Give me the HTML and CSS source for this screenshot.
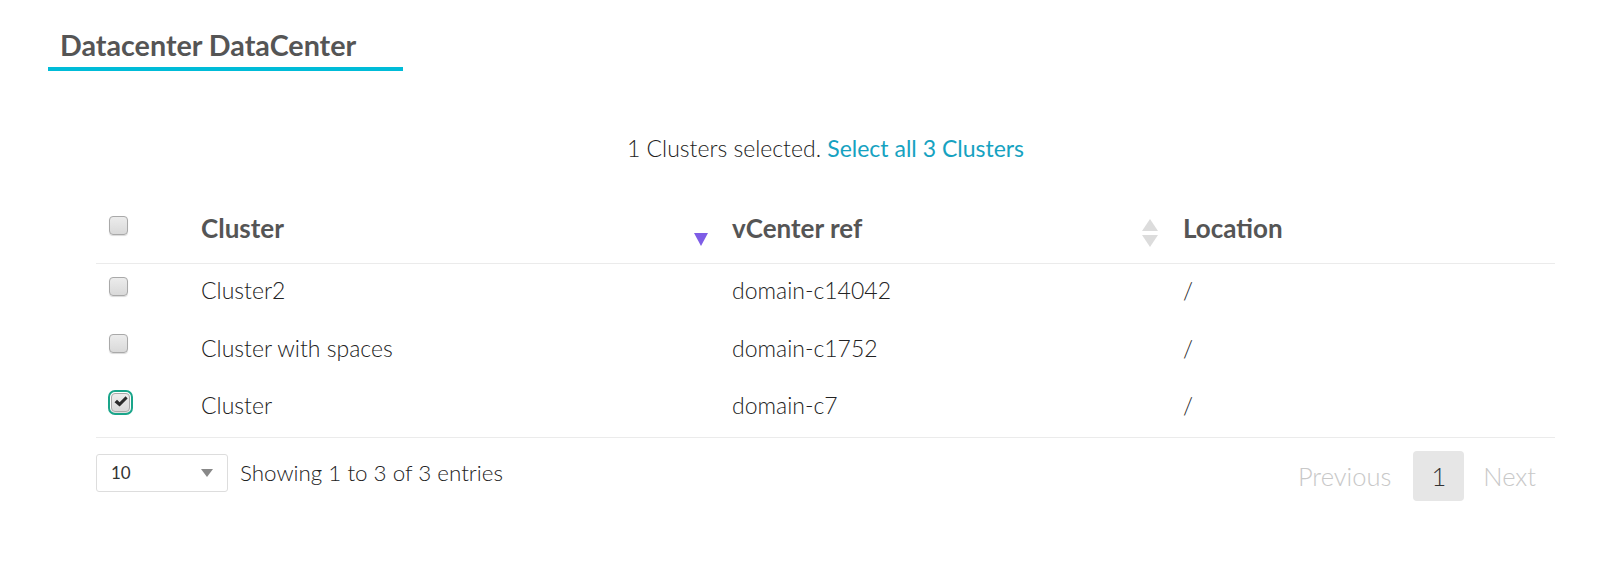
FILE: index.html
```html
<!DOCTYPE html>
<html>
<head>
<meta charset="utf-8">
<link rel="stylesheet" href="styles.css">
</head>
<body>
<div class="page">
  <div class="title-tab"><h1 class="title">Datacenter DataCenter</h1></div>
  <div class="content">
    <p class="selection">1 Clusters selected. <a class="link">Select all 3 Clusters</a></p>
    <table class="grid">
      <colgroup>
        <col class="w-check">
        <col class="w-cluster">
        <col class="w-ref">
        <col class="w-loc">
      </colgroup>
      <thead>
        <tr>
          <th class="col-check"><span class="cb"></span></th>
          <th class="sort-desc">Cluster</th>
          <th class="sort-both">vCenter ref</th>
          <th>Location</th>
        </tr>
      </thead>
      <tbody>
        <tr>
          <td class="col-check"><span class="cb"></span></td>
          <td>Cluster2</td>
          <td>domain-c14042</td>
          <td>/</td>
        </tr>
        <tr>
          <td class="col-check"><span class="cb"></span></td>
          <td>Cluster with spaces</td>
          <td>domain-c1752</td>
          <td>/</td>
        </tr>
        <tr>
          <td class="col-check"><span class="cb cb-checked"><svg class="tick" viewBox="0 0 14 12" width="14" height="12"><path d="M0.5 6.2 L3 3.8 L5.6 6.3 L11.6 0.3 L13.6 2.4 L5.6 10.6 Z" fill="#2b2b2b"/></svg></span></td>
          <td>Cluster</td>
          <td>domain-c7</td>
          <td>/</td>
        </tr>
      </tbody>
    </table>
    <div class="footer">
      <div class="footer-left">
        <div class="select"><span class="select-value">10</span><span class="select-arrow"></span></div>
        <span class="info">Showing 1 to 3 of 3 entries</span>
      </div>
      <div class="pager">
        <span class="pg disabled">Previous</span>
        <span class="pg current">1</span>
        <span class="pg disabled">Next</span>
      </div>
    </div>
  </div>
</div>
</body>
</html>
```

FILE: styles.css
```css
html, body {
  margin: 0;
  padding: 0;
  background: #ffffff;
}
body {
  font-family: Lato, "Open Sans", sans-serif;
  color: #333;
}
.page {
  padding-top: 27px;
}
.title-tab {
  margin-left: 48px;
  width: 355px;
  box-sizing: border-box;
  padding-left: 12px;
  border-bottom: 4px solid #00bcd8;
}
.title {
  margin: 0;
  font-size: 28.7px;
  font-weight: 700;
  color: #555;
  line-height: 36px;
  padding-bottom: 4px;
}
.content {
  margin-left: 96px;
  width: 1459px;
}
.selection {
  margin: 63px 0 0 0;
  text-align: center;
  font-size: 23px;
  font-weight: 300;
  line-height: 28px;
  color: #222;
}
.link {
  color: #16a2c1;
  font-weight: 400;
}
.grid {
  width: 100%;
  border-collapse: collapse;
  margin-top: 38px;
  table-layout: fixed;
}
.w-check { width: 89px; }
.w-cluster { width: 531px; }
.w-ref { width: 451px; }
.grid th {
  text-align: left;
  font-size: 26px;
  font-weight: 700;
  color: #555;
  height: 63px;
  padding: 0 16px 6px 16px;
  border-bottom: 1px solid #ebebeb;
  position: relative;
  vertical-align: middle;
  box-sizing: border-box;
}
.grid td {
  font-size: 23px;
  font-weight: 300;
  color: #222;
  height: 58px;
  padding: 0 16px 5px 16px;
  vertical-align: middle;
  box-sizing: border-box;
}
.grid tbody tr:last-child td {
  border-bottom: 1px solid #ebebeb;
}
.grid .col-check {
  padding: 0 0 0 13px;
  vertical-align: top;
}
.grid th.col-check { padding-top: 16px; }
.grid td.col-check { padding-top: 13px; }
.sort-desc::after {
  content: "";
  position: absolute;
  right: 8px;
  top: 33px;
  border-left: 7px solid transparent;
  border-right: 7px solid transparent;
  border-top: 13px solid #7e5de6;
}
.sort-both::before,
.sort-both::after {
  content: "";
  position: absolute;
  right: 9px;
}
.sort-both::before {
  top: 19px;
  border-left: 8px solid transparent;
  border-right: 8px solid transparent;
  border-bottom: 12px solid #dcdcdc;
}
.sort-both::after {
  top: 35px;
  border-left: 8px solid transparent;
  border-right: 8px solid transparent;
  border-top: 12px solid #dcdcdc;
}
.cb {
  display: block;
  width: 17px;
  height: 17px;
  border: 1px solid #a9a9a9;
  border-radius: 4px;
  background: linear-gradient(#ececec, #d9d9d9);
  box-shadow: 0 1px 1px rgba(0,0,0,0.15);
  position: relative;
}
.cb-checked {
  outline: 2px solid #1aa58a;
  outline-offset: 1px;
  margin-left: 2px;
  margin-top: 1px;
}
.tick {
  position: absolute;
  left: 2px;
  top: 2px;
}
.footer {
  display: flex;
  justify-content: space-between;
  align-items: flex-start;
}
.footer-left {
  display: flex;
  align-items: center;
  gap: 12px;
  margin-top: 16px;
}
.select {
  width: 132px;
  height: 38px;
  border: 1px solid #ddd;
  border-radius: 3px;
  display: flex;
  align-items: center;
  justify-content: space-between;
  padding: 0 14px 0 14px;
  box-sizing: border-box;
}
.select-value {
  font-size: 17px;
  color: #333;
}
.select-arrow {
  width: 0;
  height: 0;
  border-left: 6px solid transparent;
  border-right: 6px solid transparent;
  border-top: 8px solid #888;
}
.info {
  font-size: 22.4px;
  font-weight: 300;
  color: #222;
}
.pager {
  display: flex;
  align-items: center;
  gap: 20px;
  margin-top: 13px;
  margin-right: 19px;
}
.pg {
  font-size: 25.5px;
  font-weight: 300;
  line-height: 50px;
}
.pg.disabled {
  color: #c8c8c8;
}
.pg.current {
  background: #e6e6e6;
  border-radius: 4px;
  color: #333;
  width: 51px;
  text-align: center;
  margin-left: 2px;
  margin-right: -1px;
}
```
